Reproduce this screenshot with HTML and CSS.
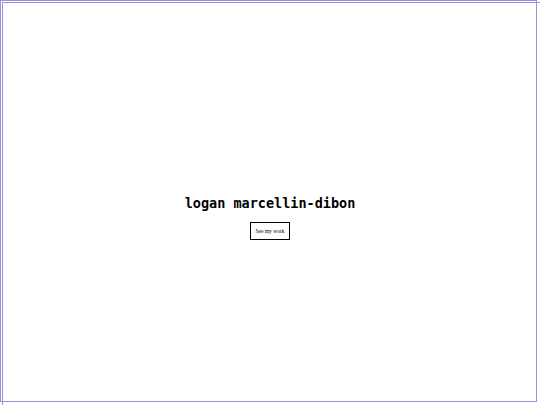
FILE: index.html
```html
<!DOCTYPE html>
<html lang="en">
<head>
<meta charset="utf-8">
<title>logan marcellin-dibon</title>
<link rel="stylesheet" href="styles.css">
</head>
<body>
<main class="hero">
  <h1 class="name">logan marcellin-dibon</h1>
  <button class="cta" type="button">See my work</button>
</main>
</body>
</html>
```

FILE: styles.css
```css
html, body {
  margin: 0;
  padding: 0;
  background: #ffffff;
}

body {
  width: 540px;
  height: 405px;
  overflow: hidden;
  position: relative;
}

body::before,
body::after {
  content: "";
  position: absolute;
  box-sizing: border-box;
  border: 1px solid #9a90e0;
  pointer-events: none;
}

body::before {
  left: 0;
  top: 0;
  width: 537px;
  height: 402px;
}

body::after {
  left: 2px;
  top: 2px;
  width: 560px;
  height: 420px;
}

.hero {
  height: 100%;
  display: flex;
  flex-direction: column;
  align-items: center;
  justify-content: center;
  gap: 11px;
}

.name {
  margin: 0;
  font-family: "DejaVu Sans Mono", monospace;
  font-weight: bold;
  font-size: 13.5px;
  line-height: 16px;
  color: #000;
  margin-top: 29px;
}

.cta {
  font-family: "Liberation Serif", serif;
  font-size: 5.5px;
  line-height: 8px;
  padding: 4px 4px;
  border: 1px solid #000;
  background: #fff;
  color: #000;
  border-radius: 0;
}
```
